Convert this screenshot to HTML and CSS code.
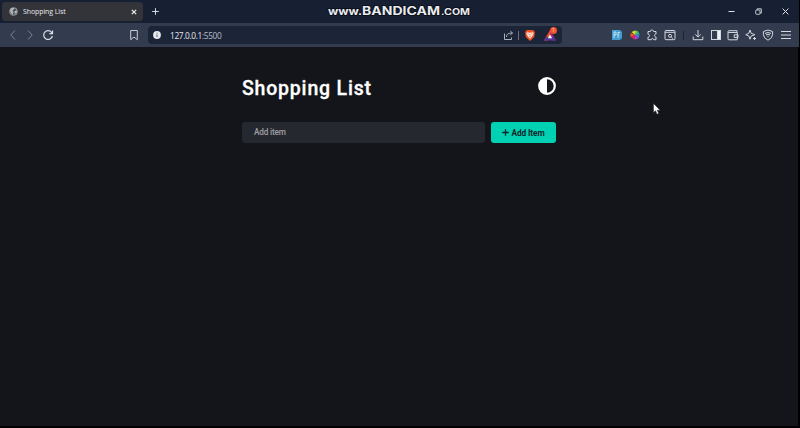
FILE: index.html
```html
<!DOCTYPE html>
<html lang="en">
<head>
<meta charset="utf-8">
<title>Shopping List</title>
<link rel="stylesheet" href="styles.css">
</head>
<body>
<div class="screen">
  <header class="tabbar">
    <div class="tab">
      <svg class="globe" viewBox="0 0 10 10" width="9" height="9"><circle cx="5" cy="5" r="4.3" fill="#4c5056" stroke="#a6a9ae"/><path d="M1 4L3 1.2 6 1 5 3 3.5 4 5 5.5 4.3 8.5 2.5 7ZM6 4.5L9 4 8 7 6.5 7.5Z" fill="#b6b9bd"/></svg>
      <span class="tab-title">Shopping List</span>
      <svg class="tab-close" viewBox="0 0 6 6" width="6" height="6"><path d="M.8.8l4.4 4.4M5.2.8L.8 5.2" stroke="#f0f0f0" stroke-width="1.2"/></svg>
    </div>
    <svg class="new-tab" viewBox="0 0 7 7" width="7" height="7"><path d="M3.5.2v6.600M.2 3.500h6.600" stroke="#d5dae2"/></svg>
    <div class="window-controls">
      <svg viewBox="0 0 7 7"><path d="M.5 3.500h6" stroke="#dde0e6"/></svg>
      <svg viewBox="0 0 7 7" fill="none" stroke="#d5d9e0" stroke-width=".9"><rect x=".7" y="2" width="4.300" height="4.300" rx=".8"/><path d="M2.200 2V.8h4.100v4.300H5"/></svg>
      <svg viewBox="0 0 7 7"><path d="M.6.6l5.800 5.800M6.400.6L.6 6.400" stroke="#dde0e6"/></svg>
    </div>
  </header>
  <nav class="toolbar">
    <div class="nav-buttons">
      <svg viewBox="0 0 12 12" fill="none" stroke="#7c8494"><path d="M8 1.500L3.800 6 8 10.500"/></svg>
      <svg viewBox="0 0 12 12" fill="none" stroke="#7c8494"><path d="M4 1.500L8.200 6 4 10.500"/></svg>
      <svg viewBox="0 0 12 12" fill="none" stroke="#dce0e7" stroke-width="1.200"><path d="M9.800 3.700A4.400 4.400 0 1 0 10.400 7M10.500 1.500v3.200H7.400"/></svg>
    </div>
    <svg class="bookmark" viewBox="0 0 10 12" width="10" height="12" fill="none" stroke="#c7ccd5"><path d="M1.700 1.500h6.600v9.200L5 8l-3.300 2.700z" stroke-linejoin="round"/></svg>
    <div class="address">
      <svg class="info" viewBox="0 0 8 8" width="8" height="8"><circle cx="4" cy="4" r="3.900" fill="#e6e8ed"/><path d="M4 3.500v2.600M4 1.800v.9" stroke="#596174"/></svg>
      <span class="url"><b>127.0.0.1</b>:5500</span>
      <svg class="share" viewBox="0 0 11 11" width="11" height="11" fill="none" stroke="#aab0bc"><path d="M1.500 3.500v6h7V7.500M3.500 7c0-3 2-4 6-4M7.300 1l2.200 2-2.200 2"/></svg>
      <i class="separator"></i>
      <svg class="brave" viewBox="0 0 12 13" width="12" height="13"><path d="M3 1h6l2 2-.8 5L6 12 1.800 8 1 3z" fill="#f15022"/><path d="M3 3.200l3 .5 3-.5.6 1.600L8 7.500 6 9.800 4 7.500 2.400 4.800z" fill="#fff0e7"/><path d="M3.500 4.600l1.700.7M8.500 4.600l-1.700.7M6 5v2M5 8l1-.6L7 8" stroke="#ed7045" stroke-width=".7" fill="none"/></svg>
      <div class="rewards">
        <svg viewBox="0 0 12 11" width="12" height="11"><path d="M6 0L0 10.500h4L6 7z" fill="#f04d25"/><path d="M6 0l6 10.500H8L6 7z" fill="#a42579"/><path d="M0 10.500h12L9.500 7h-7z" fill="#533498"/><path d="M6 4.500L8.200 8.300H3.800z" fill="#fff"/></svg>
        <span class="badge">1</span>
      </div>
    </div>
    <div class="extensions">
      <svg viewBox="0 0 12 12"><path d="M1 1h8l2 2v6l-2 2H1z" fill="#459dcf" stroke="none"/><path d="M3 9V3h2v3H3M7 9V3.500h2M7 6h1.500" stroke="#d7f0fa" stroke-width=".8" fill="none"/></svg>
      <svg viewBox="0 0 12 12"><path d="M6 6V1.500L2.500 3z" fill="#ffd02d"/><path d="M6 6L1.500 4v4z" fill="#ff5d20"/><path d="M6 6L1.800 8 5.500 10.500z" fill="#ee234d"/><path d="M6 6l-.5 4.500L9 9.700z" fill="#c637dd"/><path d="M6 6l3.500 3.500 1-4z" fill="#497bf2"/><path d="M6 6l4.600-.8L9 2.500z" fill="#25c7a8"/><path d="M6 6l3.200-3.500L6 1.300z" fill="#62d548"/></svg>
      <svg viewBox="0 0 12 12"><path d="M2 2.500h2.300C4 .5 7.700.5 7.500 2.500H10V5c-2 0-2 3 0 3v2.700H7.700c0-1.600-2.400-1.600-2.400 0H2V8.200c2 0 2-3 0-3z"/></svg>
      <svg viewBox="0 0 12 12"><rect x="1" y="1.500" width="10" height="9.200" rx="1"/><path d="M1 3.300h10M7.200 8l1.600 1.500"/><circle cx="6" cy="6.800" r="1.500"/></svg>
      <i class="divider"></i>
      <svg viewBox="0 0 12 12"><path d="M6 1v7M3.300 5.400L6 8.100l2.700-2.700M1.200 7.500v3.200h9.600V7.500"/></svg>
      <svg viewBox="0 0 12 12"><rect x="1.500" y="1.500" width="9" height="9"/><path d="M7.500 1.500h3v9h-3z" fill="#f1f2f5"/></svg>
      <svg viewBox="0 0 12 12"><path d="M10 3.500V1.700H2q-1 0-1 1v7.100q0 1 1 1h8.300V3.500H1.200M11 5.800H7.200v2.700H11z"/></svg>
      <svg viewBox="0 0 12 12"><path d="M5 1l1.200 3.300L9.800 5.700 6.200 7 5 10.200 3.800 7 .8 5.700l3-1.400zM9.500 8v3M8 9.500h3"/></svg>
      <svg viewBox="0 0 12 12"><path d="M6 1l4.600 1.500v3.200Q10.500 9 6 11.200 1.500 9 1.400 5.700V2.500zM3 4.400q3-1.800 6 0M4 6q2-1.300 4 0M6 7v1"/></svg>
      <svg viewBox="0 0 12 12"><path d="M1 2.500h10M1 6h10M1 9.500h10"/></svg>
    </div>
  </nav>
  <main class="page">
    <div class="container">
      <div class="heading">
        <h1>Shopping List</h1>
        <svg class="contrast" viewBox="0 0 18 18" width="18" height="18"><circle cx="9" cy="9" r="7.800" fill="#14151a" stroke="#fff" stroke-width="2.200"/><path d="M9 1v16A8 8 0 0 1 9 1z" fill="#fff"/></svg>
      </div>
      <form class="add-form">
        <div class="field">Add item</div>
        <button class="add" type="button"><svg viewBox="0 0 7 7" width="7" height="7"><path d="M3.500.2v6.600M.2 3.500h6.600" stroke="#10252a" stroke-width="1.300"/></svg><span>Add Item</span></button>
      </form>
    </div>
  </main>
  <svg class="watermark" viewBox="0 0 150 20" width="150" height="20">
    <text x="5" y="13.500" font-size="10.500" textLength="34" lengthAdjust="spacingAndGlyphs">www.</text>
    <text x="39" y="13.700" font-size="11.500" textLength="78" lengthAdjust="spacingAndGlyphs">BANDICAM</text>
    <text x="118" y="13.500" font-size="8.500" textLength="29" lengthAdjust="spacingAndGlyphs">.COM</text>
  </svg>
  <svg class="cursor" viewBox="0 0 8 12" width="8" height="12"><path d="M.5.5v9l2-1.700L4 11.200l1.700-.8-1.500-3.200h2.900z" fill="#fff" stroke="#24252a" stroke-width=".5"/></svg>
</div>
</body>
</html>
```
FILE: styles.css
```css
* { box-sizing: border-box; }
body { margin: 0; background: #000; }
svg { display: block; flex: none; }
.screen { position: relative; display: flex; flex-direction: column; width: 799px; height: 428px; padding-bottom: 2px; overflow: hidden; font-family: "Open Sans", sans-serif; }
.tabbar { display: flex; align-items: center; height: 23px; background: #172033; }
.tab { display: flex; align-items: center; width: 141px; height: 19px; margin-left: 2px; padding: 0 6px 0 7px; border-radius: 4px; background: #333439; }
.tab-title { margin-left: 5px; color: #e8e9eb; font-size: 7px; letter-spacing: -.1px; white-space: nowrap; }
.tab-close { margin-left: auto; }
.new-tab { margin-left: 9px; }
.window-controls { display: flex; gap: 20px; margin-left: auto; padding-right: 10px; }
.window-controls svg { width: 7px; height: 7px; }
.toolbar { display: flex; align-items: center; height: 24px; background: #333c4e; }
.nav-buttons { display: flex; gap: 5px; margin-left: 7px; }
.nav-buttons svg { width: 12px; height: 12px; }
.nav-buttons svg:last-child { margin-left: 1px; }
.bookmark { margin-left: 75px; }
.address { display: flex; align-items: center; width: 414px; height: 18px; margin-left: 9px; padding: 0 4px 0 5px; border-radius: 4px; background: #1c2538; }
.url { margin-left: 9px; color: #b7bdc9; font: 8.3px "Open Sans", sans-serif; letter-spacing: -.34px; }
.url b { color: #e5e8ed; font-weight: 400; }
.share { margin-left: auto; }
.separator { width: 1px; height: 9px; margin: 0 5px 0 4px; background: #687181; }
.rewards { position: relative; margin: 0 2px 0 8px; }
.badge { position: absolute; top: -3px; left: 6px; width: 7px; height: 7px; border-radius: 50%; background: #f45331; color: #ffd6c9; font-size: 5px; line-height: 7px; text-align: center; }
.extensions { display: flex; align-items: center; gap: 5.6px; margin-left: auto; padding-right: 7px; }
.extensions svg { width: 12px; height: 12px; fill: none; stroke: #d3d7de; stroke-width: 1; }
.extensions svg:nth-child(2) { stroke: none; }
.divider { width: 1px; height: 9px; margin: 0 2px; background: #1b2434; }
.page { flex: 1; width: 798px; background: #14151a; }
.container { width: 314px; margin-left: 242px; padding-top: 28px; }
.heading { display: flex; justify-content: space-between; height: 47px; }
h1 { margin: 1px 0 0; color: #fff; font: 500 19.5px/25px Roboto, sans-serif; letter-spacing: .8px; white-space: nowrap; -webkit-text-stroke: .3px #fff; }
.contrast { margin-top: 2px; }
.add-form { display: flex; gap: 6px; height: 21px; }
.field { flex: 1; padding-left: 12px; border-radius: 3px; background: #25282f; color: #a0a1a4; font: 500 8.2px/21px Roboto, sans-serif; letter-spacing: -.15px; }
.add { display: flex; align-items: center; justify-content: center; gap: 2px; width: 65px; padding: 0; border: 0; border-radius: 3px; background: #00d1b2; color: #10252a; font: 700 8.3px Roboto, sans-serif; letter-spacing: -.1px; white-space: nowrap; }
.watermark { position: absolute; top: 1px; left: 323px; }
.watermark text { fill: #e9ebee; stroke: #080d18; stroke-width: 1.5px; paint-order: stroke; font-family: Inter, sans-serif; font-weight: 700; }
.cursor { position: absolute; top: 103px; left: 653px; }
```
